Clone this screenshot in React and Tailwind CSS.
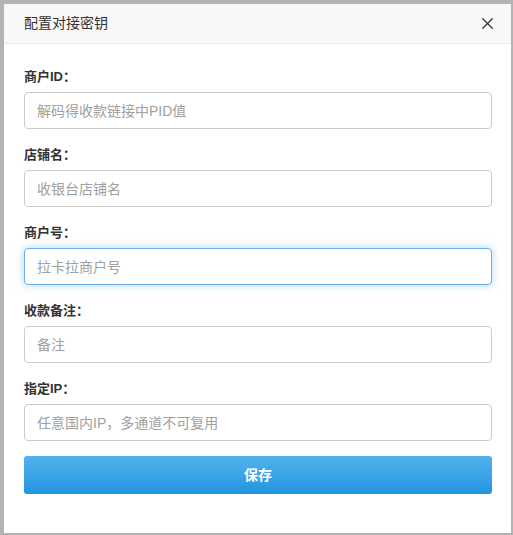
import { X } from 'lucide-react';

const fields = [
  { label: '商户ID：', placeholder: '解码得收款链接中PID值' },
  { label: '店铺名：', placeholder: '收银台店铺名' },
  { label: '商户号：', placeholder: '拉卡拉商户号', focused: true },
  { label: '收款备注：', placeholder: '备注' },
  { label: '指定IP：', placeholder: '任意国内IP，多通道不可复用' },
];

export default function App() {
  return (
    <div
      className="w-[513px] h-[535px] bg-[#b3b3b3] pl-[4px] pt-[4px] pr-[2px] pb-[2px]"
      style={{ fontFamily: '"Liberation Sans", "Noto Sans CJK SC", sans-serif' }}
    >
      <div className="h-full bg-white flex flex-col">
        {/* Header */}
        <div className="h-[40px] bg-[#f8f8f8] border-b border-[#ebebeb] flex items-center justify-between pl-[20px] pr-[14px]">
          <span className="text-[14px] text-[#333]">配置对接密钥</span>
          <X size={19} strokeWidth={1.6} className="text-[#333]" />
        </div>

        {/* Form */}
        <div className="pl-[20px] pr-[19px] pt-[23px] flex flex-col">
          {fields.map((f) => (
            <div key={f.label} className="flex flex-col mb-[16px]">
              <label className="text-[13px] leading-[20px] font-bold text-[#333] mb-[5px]">{f.label}</label>
              <input
                type="text"
                placeholder={f.placeholder}
                className={
                  f.focused
                    ? 'h-[37px] rounded-[4px] border border-[#66afe9] px-[12px] text-[14px] outline-none shadow-[0_0_8px_rgba(102,175,233,0.5)] placeholder:text-[#a0a0a0]'
                    : 'h-[37px] rounded-[4px] border border-[#ccc] px-[12px] text-[14px] outline-none placeholder:text-[#a0a0a0]'
                }
              />
            </div>
          ))}
          <button className="-mt-[1px] h-[38px] rounded-[3px] bg-gradient-to-b from-[#52b2ec] to-[#1f95e0] text-white text-[14px] font-bold">
            保存
          </button>
        </div>
      </div>
    </div>
  );
}
